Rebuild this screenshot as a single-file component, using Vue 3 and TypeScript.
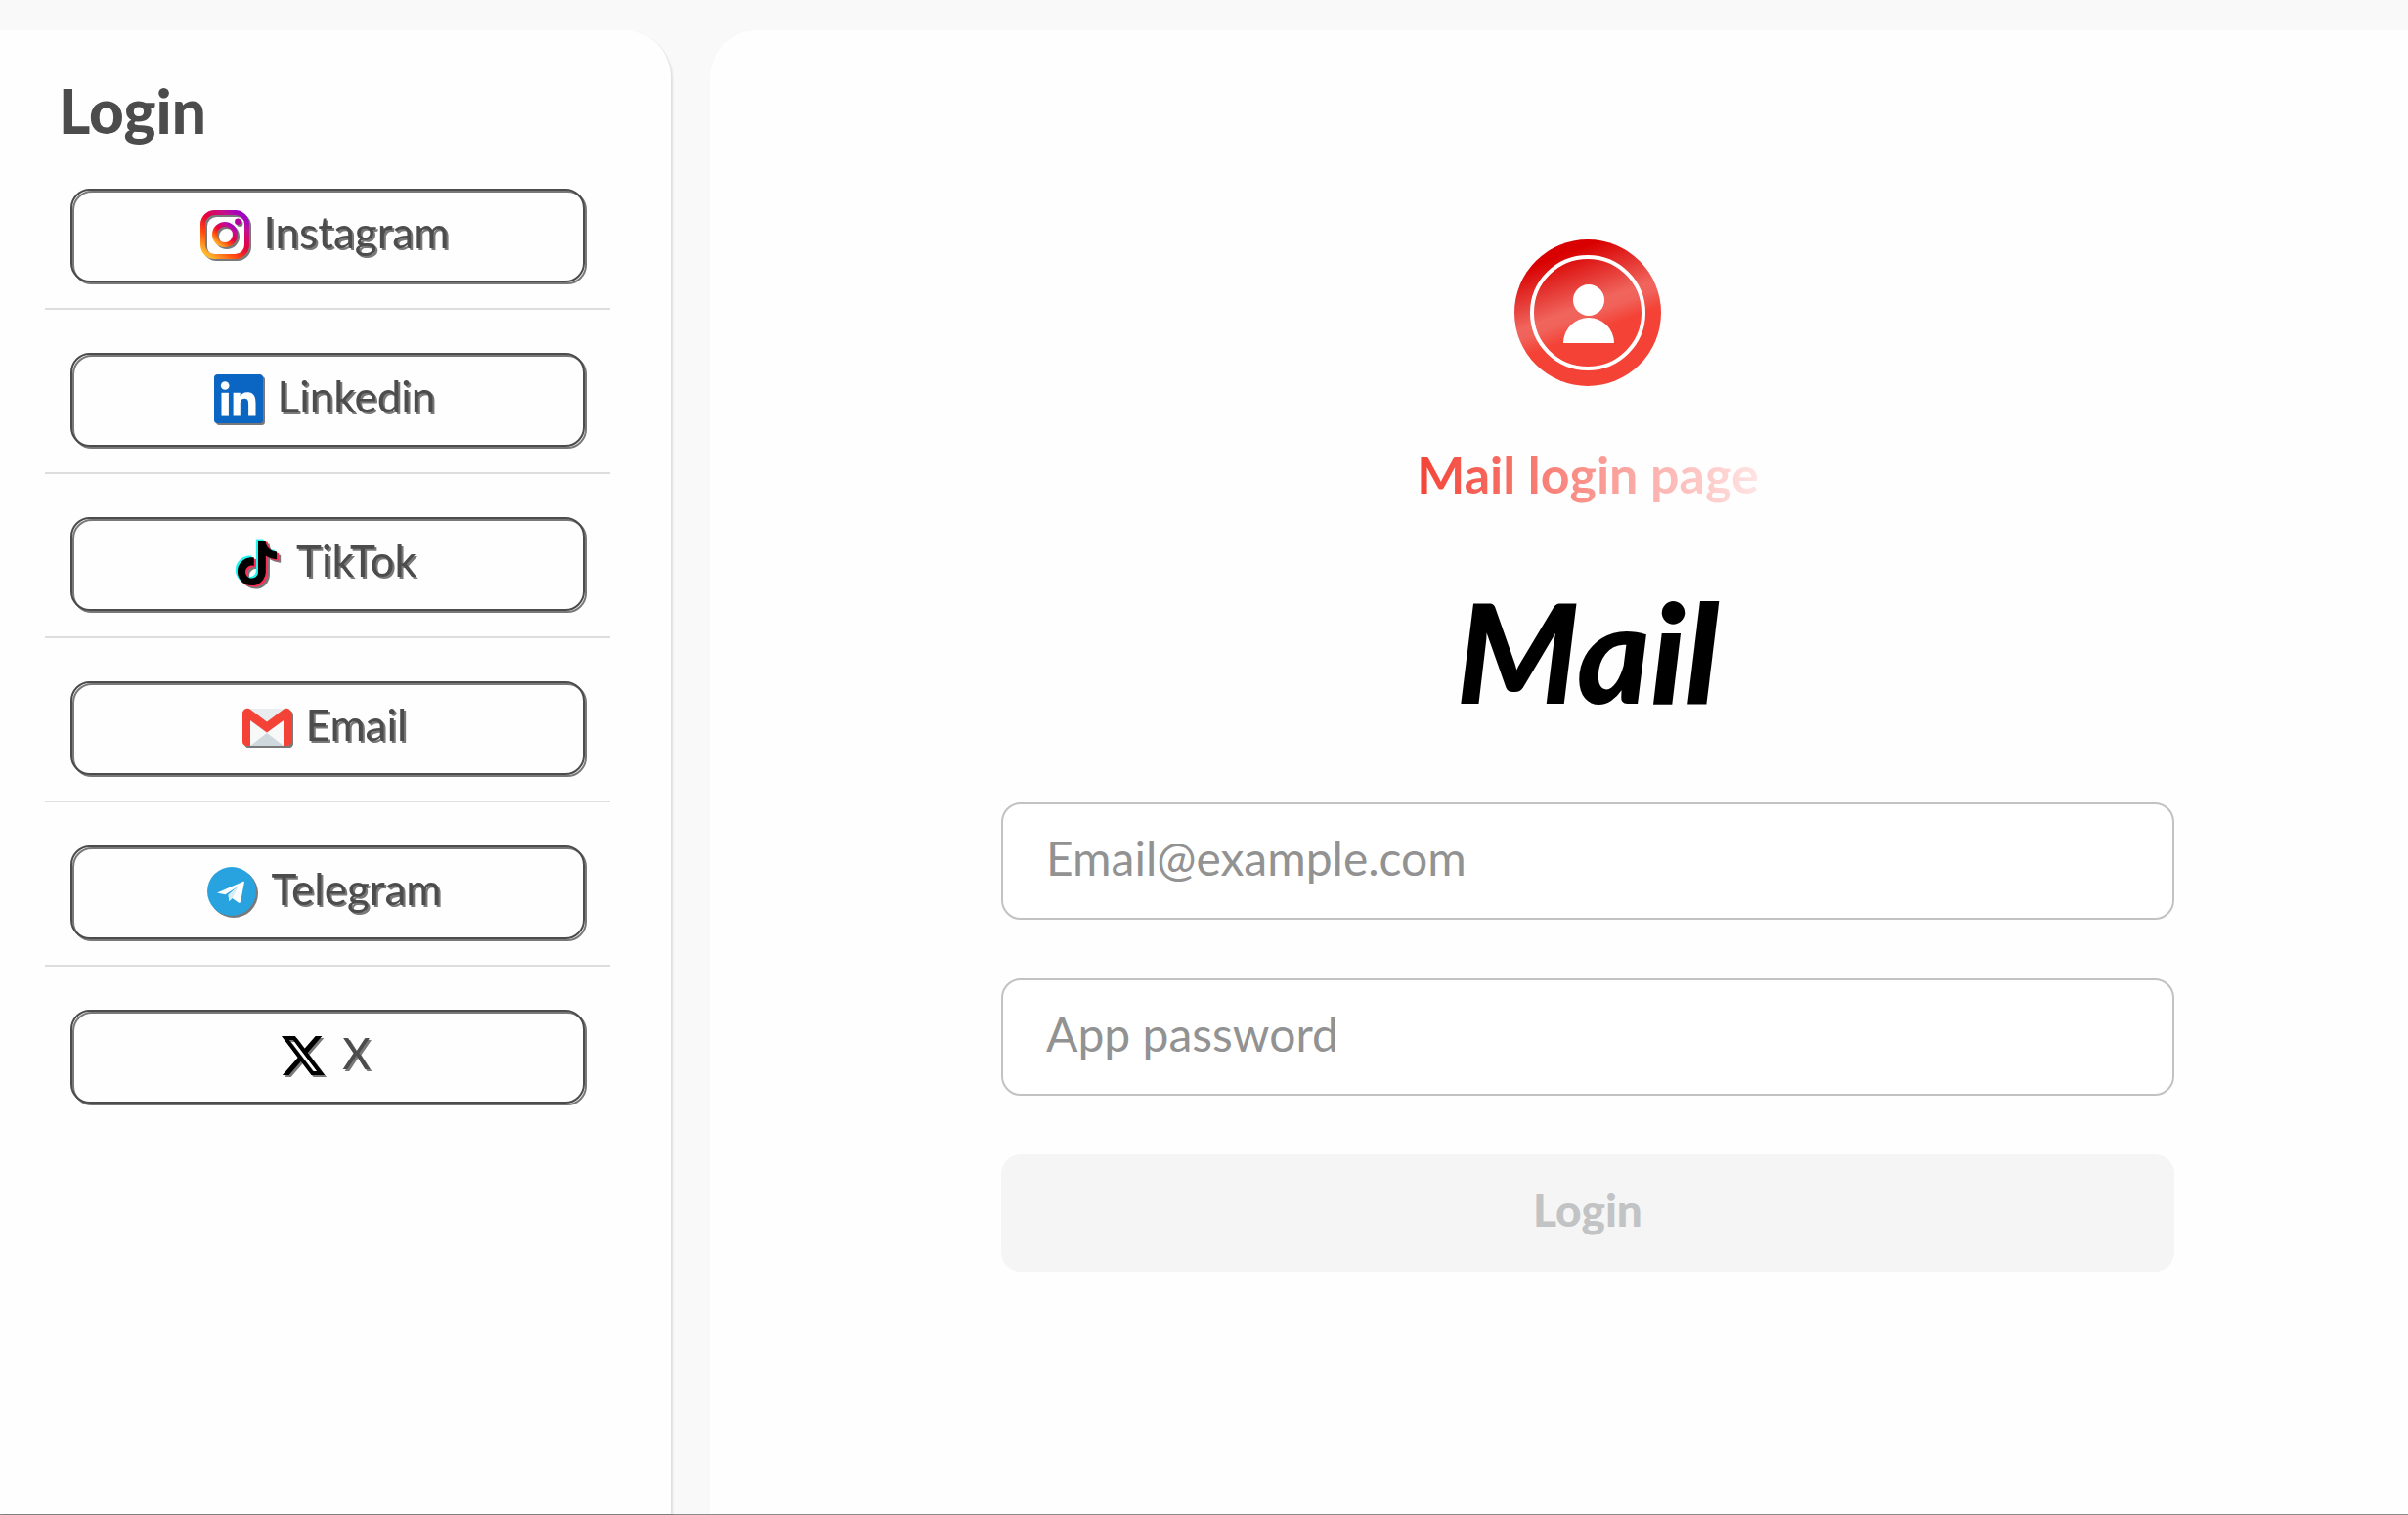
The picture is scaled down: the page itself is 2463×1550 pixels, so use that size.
<script setup lang="ts">
import { computed, ref } from 'vue'

type Provider = 'instagram' | 'linkedin' | 'tiktok' | 'email' | 'telegram' | 'x'

const providers: { id: Provider; label: string }[] = [
  { id: 'instagram', label: 'Instagram' },
  { id: 'linkedin', label: 'Linkedin' },
  { id: 'tiktok', label: 'TikTok' },
  { id: 'email', label: 'Email' },
  { id: 'telegram', label: 'Telegram' },
  { id: 'x', label: 'X' },
]

const tiktokNote =
  'M12.525.02c1.31-.02 2.61-.01 3.91-.02.08 1.53.63 3.09 1.75 4.17 1.12 1.11 2.7 1.62 4.24 1.79v4.03c-1.44-.05-2.89-.35-4.2-.97-.57-.26-1.1-.59-1.62-.93-.01 2.92.01 5.84-.02 8.75-.08 1.4-.54 2.79-1.35 3.94-1.31 1.92-3.58 3.17-5.91 3.21-1.43.08-2.86-.31-4.08-1.03-2.02-1.19-3.44-3.37-3.65-5.71-.02-.5-.03-1-.01-1.49.18-1.9 1.12-3.72 2.58-4.96 1.66-1.44 3.98-2.13 6.15-1.72.02 1.48-.04 2.96-.04 4.44-.99-.32-2.15-.23-3.02.37-.63.41-1.11 1.04-1.36 1.75-.21.51-.15 1.07-.14 1.61.24 1.64 1.82 3.02 3.5 2.87 1.12-.01 2.19-.66 2.77-1.61.19-.33.4-.67.41-1.06.1-1.79.06-3.57.07-5.36.01-4.03-.01-8.05.02-12.07z'

const email = ref('')
const password = ref('')
const incomplete = computed(() => !email.value || !password.value)
</script>

<template>
  <div class="page">
    <aside class="sidebar">
      <h1 class="sidebar-title">Login</h1>
      <ul class="providers">
        <li v-for="p in providers" :key="p.id" class="provider-item">
          <button type="button" class="provider">
            <svg v-if="p.id === 'instagram'" class="icon" viewBox="0 0 50 50" aria-hidden="true">
              <defs>
                <linearGradient id="ig" x1="0.1" y1="1" x2="0.9" y2="0">
                  <stop offset="0" stop-color="#ffc02e" />
                  <stop offset="0.3" stop-color="#ff4a10" />
                  <stop offset="0.55" stop-color="#e8003c" />
                  <stop offset="0.8" stop-color="#c4108f" />
                  <stop offset="1" stop-color="#9a00d0" />
                </linearGradient>
              </defs>
              <g fill="none" stroke="url(#ig)" stroke-width="5">
                <rect x="2.5" y="2.5" width="45" height="45" rx="12" />
                <circle cx="25" cy="25" r="10.5" />
              </g>
              <circle cx="38.3" cy="11.7" r="3.2" fill="#b4009e" />
            </svg>
            <svg v-else-if="p.id === 'linkedin'" class="icon" viewBox="0 0 50 50" aria-hidden="true">
              <rect width="50" height="50" rx="3.5" fill="#0a66c2" />
              <g fill="#fff">
                <circle cx="11.2" cy="11.5" r="4.3" />
                <rect x="7.5" y="18.8" width="7.4" height="23.8" />
                <path d="M19.6 18.8h7.1V22c1-1.9 3.5-3.8 7-3.8 7.4 0 8.8 4.9 8.8 11.3v13.1h-7.4V31c0-2.8 0-6.3-3.9-6.3s-4.4 3-4.4 6.1v11.8h-7.2z" />
              </g>
            </svg>
            <svg v-else-if="p.id === 'tiktok'" class="icon" viewBox="-1 -1 26 26" aria-hidden="true">
              <path :d="tiktokNote" fill="#25f4ee" transform="translate(-1.1 -.8)" />
              <path :d="tiktokNote" fill="#fe2c55" transform="translate(1.1 .8)" />
              <path :d="tiktokNote" fill="#000" />
            </svg>
            <svg v-else-if="p.id === 'email'" class="icon" viewBox="0 0 50 50" aria-hidden="true">
              <rect x="1" y="6" width="48" height="38" rx="4" fill="#e8ecee" />
              <path d="M7 18l18 13 18-13v26H7z" fill="#f7f8f8" />
              <path d="M25 31L8 44h34z" fill="#cfd8dc" />
              <path d="M0 11c0-4.200 4.800-6.600 8-4.200l17 12.700 17-12.700c3.200-2.400 8 0 8 4.200v29c0 2.200-1.800 4-4 4h-4V18L25 30.500 8 18v26H4c-2.200 0-4-1.800-4-4z" fill="#f44336" />
            </svg>
            <svg v-else-if="p.id === 'telegram'" class="icon" viewBox="0 0 50 50" aria-hidden="true">
              <circle cx="25" cy="25" r="25" fill="#28a3e0" />
              <path d="M10 26.500L36.500 15c1-.4 1.500.2 1.300 1.200L34 35.500c-.2 1.300-1.100 1.600-2.200 1l-6.300-4.500-3.200 3-.7-6.600L32 19.500 18.500 28.300z" fill="#fff" />
              <path d="M22.300 35l-.7-6.600L32 19.500l-6.500 12.500z" fill="#d9edf8" />
            </svg>
            <svg v-else class="icon" viewBox="-1.600 -1.600 27.200 27.200" aria-hidden="true">
              <path d="M18.900 1.150h3.680l-8.040 9.190L24 22.850h-7.400l-5.800-7.580-6.630 7.580H.49l8.600-9.830L0 1.150h7.590l5.240 6.930zM17.600 20.640h2.040L6.490 3.240H4.300z" fill="#000" />
            </svg>
            <span class="provider-label">{{ p.label }}</span>
          </button>
        </li>
      </ul>
    </aside>

    <main class="panel">
      <svg class="avatar" viewBox="0 0 150 150" aria-hidden="true">
        <defs>
          <linearGradient id="badge" gradientUnits="userSpaceOnUse" x1="42" y1="-15" x2="108" y2="165">
            <stop offset="0.16" stop-color="#d80000" />
            <stop offset="0.46" stop-color="#f0655d" />
            <stop offset="0.51" stop-color="#f0625a" />
            <stop offset="0.6" stop-color="#f44336" />
          </linearGradient>
        </defs>
        <circle cx="75" cy="75" r="75" fill="url(#badge)" />
        <circle cx="75" cy="75" r="57" fill="none" stroke="#fff" stroke-width="4" />
        <circle cx="76" cy="62" r="16" fill="#fff" />
        <path d="M50 106a26 26 0 0 1 52 0z" fill="#fff" />
      </svg>
      <h2 class="panel-title">Mail login page</h2>
      <div class="wordmark">Mail</div>
      <form class="form" @submit.prevent>
        <input v-model="email" class="field" type="email" placeholder="Email@example.com" aria-label="Email" />
        <input v-model="password" class="field" type="password" placeholder="App password" aria-label="App password" />
        <button class="submit" type="submit" :disabled="incomplete">Login</button>
      </form>
    </main>
  </div>
</template>

<style>
body {
  margin: 0;
  background: #f9f9f9;
}
</style>

<style scoped>
.page,
.page * {
  box-sizing: border-box;
}

.page {
  display: flex;
  gap: 40px;
  min-height: 100vh;
  padding-top: 31px;
  border-bottom: 1px solid #8c8c8c;
  background: #f9f9f9;
  color: #4c4c4c;
  font-family: Lato, "Open Sans", sans-serif;
}

.sidebar {
  flex: 0 0 686px;
  padding: 46px 62px 48px 46px;
  border-radius: 0 48px 0 0;
  background: #fefefe;
  box-shadow: 2px 2px 2px rgba(0, 0, 0, 0.1);
}

.sidebar-title {
  margin: 0 0 44px;
  padding-left: 14px;
  font-size: 62px;
  font-weight: 900;
  line-height: 72px;
}

.providers {
  margin: 0;
  padding: 0;
  list-style: none;
}

.provider-item {
  padding: 0 26px 26px;
}

.provider-item + .provider-item {
  padding-top: 44px;
  border-top: 2px solid #dedede;
}

.provider {
  display: flex;
  align-items: center;
  justify-content: center;
  gap: 15px;
  width: 100%;
  height: 96px;
  padding: 0 6px 2px 0;
  border: 2px solid #4c4c4c;
  border-radius: 20px;
  background: none;
  color: inherit;
  font-family: inherit;
  font-size: 44px;
  line-height: 52px;
  filter: drop-shadow(2px 2px 0 rgba(76, 76, 76, 0.75));
  cursor: pointer;
}

.icon {
  width: 50px;
  height: 50px;
}

.provider-label {
  padding-bottom: 6px;
}

.panel {
  flex: 1;
  display: flex;
  flex-direction: column;
  align-items: center;
  min-width: 0;
  padding: 214px 0 64px 59px;
  border-radius: 48px 0 0 0;
  background: #fefefe;
  box-shadow: 0 0 2px rgba(0, 0, 0, 0.03);
}

.avatar {
  width: 150px;
  height: 150px;
}

.panel-title {
  margin: 60px 0 48px;
  background: linear-gradient(90deg, #f44336, #ffe4e4);
  background-clip: text;
  -webkit-background-clip: text;
  color: transparent;
  font-size: 52px;
  font-weight: 700;
  line-height: 60px;
}

.wordmark {
  margin-bottom: 54px;
  color: #000;
  font-size: 142px;
  font-style: italic;
  font-weight: 900;
  line-height: 204px;
}

.form {
  display: flex;
  flex-direction: column;
  gap: 60px;
  width: 100%;
  max-width: 1200px;
}

.field,
.submit {
  width: 100%;
  height: 120px;
  border-radius: 20px;
  font-family: inherit;
}

.field {
  padding: 0 44px 8px;
  border: 2px solid #c2c2c2;
  background: #fff;
  color: #4c4c4c;
  font-size: 48px;
}

.field::placeholder {
  color: #929292;
  opacity: 1;
}

.submit {
  padding: 0 0 8px;
  border: 0;
  background: #f5f5f5;
  color: #c2c3c4;
  font-size: 46px;
  font-weight: 900;
}
</style>
